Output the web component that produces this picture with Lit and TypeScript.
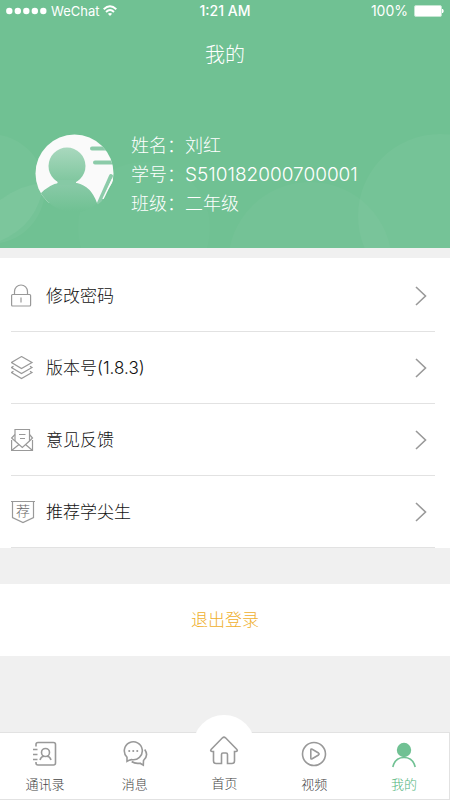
import { LitElement, html, css, svg } from "lit";
import { customElement } from "lit/decorators.js";
import { classMap } from "lit/directives/class-map.js";

const lockIcon = svg`<svg class="icon" viewBox="0 0 24 24" width="24" height="24">
  <path d="M3.500 10V7.500a6.500 6.500 0 0 1 13 0V10" /><rect x="0.600" y="10.500" width="19" height="11.500" rx="1" /><path d="M10 13.500v5" />
</svg>`;
const layersIcon = svg`<svg class="icon" viewBox="0 0 24 24" width="24" height="24">
  <path d="M10.5 .6L21 6.5L10.5 12.500L.5 6.500Z" />
  <path d="M2.500 10.200L.5 11.500L10.500 17.500L21 11.500L19 10.200" />
  <path d="M2.500 15.200L.5 16.500L10.500 22.500L21 16.500L19 15.200" />
</svg>`;
const mailIcon = svg`<svg class="icon" viewBox="0 0 24 24" width="24" height="24">
  <path d="M4 13V1.500H18.500V13" /><path d="M4 6.500L.6 10L4 13L11.300 19.500L18.500 13L21.500 10L18.500 6.500" />
  <path d="M.6 12V22.500H21.500V12M.6 22.500L8 16.500M21.500 22.500L14.500 16.500" />
  <path d="M8 6.500H14.500M9 10.500H14" />
</svg>`;
const recommendIcon = svg`<svg class="icon" viewBox="0 0 24 24" width="24" height="24">
  <path d="M0 1.500H24M1.500 1.500V17.500L12 22.500L22.500 17.500V1.500" />
  <text class="glyph" x="12" y="16" text-anchor="middle">荐</text>
</svg>`;

const contactsIcon = svg`<svg class="tab-icon" viewBox="0 0 28 28" width="28" height="28">
  <path d="M5 6.500V4.500Q5 2.500 7 2.500H22.500Q24.500 2.500 24.500 4.500V23Q24.500 25 22.500 25H7Q5 25 5 23V22" />
  <path d="M2 9.500H6.500M2 14.500H6.500M2 19.500H6.500" />
  <circle cx="14.500" cy="12.500" r="4" /><path d="M9 20Q10 16.500 13 16.300M20 20Q19 16.500 16 16.300" />
</svg>`;
const chatIcon = svg`<svg class="tab-icon" viewBox="0 0 28 28" width="28" height="28">
  <path d="M6 21.300V17.200A9 9 0 1 1 10.500 19.600Q8 20 6 21.300Z" />
  <path d="M23.700 9.500Q28 15.500 22.500 20.500L22.300 25.200L19 23.200Q14 24 10.700 21.500" />
  <path class="dots" d="M8.200 11h.1M12.200 11h.1M16.200 11h.1" />
</svg>`;
const homeIcon = svg`<svg class="tab-icon" viewBox="0 0 30 30" width="30" height="30">
  <path d="M4.500 16.500H3Q.8 16 2.300 14.300L13.500 2.800Q15 1.500 16.500 2.800L27.700 14.300Q29.200 16 27 16.500H25.500V26Q25.500 28.500 23 28.500H18.500V19.500Q18.500 18 17 18H14Q12.500 18 12.500 19.500V28.500H7Q4.500 28.500 4.500 26Z" />
</svg>`;
const videoIcon = svg`<svg class="tab-icon" viewBox="0 0 28 28" width="28" height="28">
  <circle cx="14" cy="14" r="11.500" /><path d="M10.800 10Q10.800 8.500 12.200 9.200L18.500 13Q19.700 14 18.500 15L12.200 18.800Q10.800 19.500 10.800 18Z" />
</svg>`;
const meIcon = svg`<svg class="tab-icon" viewBox="0 0 28 28" width="28" height="28">
  <circle class="solid" cx="14" cy="10" r="7.200" /><path d="M2.800 27Q5 17.500 14 17.500Q23 17.500 25.200 27" />
</svg>`;

const rows = [
  { icon: lockIcon, text: "修改密码" },
  { icon: layersIcon, text: "版本号(1.8.3)" },
  { icon: mailIcon, text: "意见反馈" },
  { icon: recommendIcon, text: "推荐学尖生" },
];

const tabs = [
  { icon: contactsIcon, text: "通讯录", kind: "" },
  { icon: chatIcon, text: "消息", kind: "" },
  { icon: homeIcon, text: "首页", kind: "home" },
  { icon: videoIcon, text: "视频", kind: "" },
  { icon: meIcon, text: "我的", kind: "active" },
];

@customElement("app-root")
export class AppRoot extends LitElement {
  static styles = css`
    :host {
      display: flex;
      flex-direction: column;
      min-height: 100vh;
      background: #f0f0f0;
      color: #333;
      font-family: Inter, "Noto Sans CJK SC", sans-serif;
      font-weight: 300;
    }
    * { box-sizing: border-box; }
    svg { display: block; flex: none; }
    button { font: inherit; border: 0; margin: 0; cursor: pointer; }

    .header {
      position: relative;
      overflow: hidden;
      height: 248px;
      background: #70c193;
      color: #fff;
    }
    .bubbles { position: absolute; inset: 0; width: 100%; height: 100%; }
    .content { position: relative; }
    .status {
      display: grid;
      grid-template-columns: 1fr auto 1fr;
      align-items: center;
      height: 22px;
      padding: 0 6px;
      font-size: 14px;
      line-height: 20px;
      font-weight: 400;
    }
    .carrier, .power { display: flex; align-items: center; }
    .carrier { gap: 4px; font-size: 13px; }
    .power { gap: 6px; justify-content: flex-end; }
    .time { font-weight: 500; }
    .title {
      margin: 0;
      padding-top: 17px;
      font-size: 20px;
      line-height: 32px;
      font-weight: 300;
      text-align: center;
    }
    .profile {
      display: flex;
      gap: 16px;
      padding: 60px 35px 0;
    }
    .avatar { margin-top: 3px; }
    .facts { margin: 0; font-size: 18px; line-height: 29px; }
    .fact { display: flex; }
    .fact dd { margin: 0; }
    .fact .number { font-size: 19px; }

    .list {
      list-style: none;
      margin: 10px 0 0;
      padding: 0 15px 0 11px;
      background: #fff;
    }
    .item { border-bottom: 1px solid #e2e2e2; }
    .row {
      display: flex;
      align-items: center;
      gap: 11px;
      width: 100%;
      height: 71px;
      padding: 0 8px 0 0;
      background: none;
      color: #111;
      font-size: 17px;
      text-align: left;
    }
    .item:first-child .row { height: 73px; padding-top: 2px; }
    .label { flex: 1; padding-bottom: 2px; }
    .icon { fill: none; stroke: #999; stroke-width: 1.2; }
    .glyph { fill: #666; stroke: none; font-size: 14px; }
    .arrow { fill: none; stroke: #999; stroke-width: 1.6; }

    .logout {
      width: 100%;
      height: 72px;
      margin-top: 36px;
      padding: 0 0 4px;
      background: #fff;
      color: #efaf2c;
      font-size: 17px;
    }

    .tabs {
      display: grid;
      grid-template-columns: repeat(5, 1fr);
      height: 68px;
      margin-top: auto;
      background: #fff;
      border: 1px solid #e2e2e2;
      border-left: 0;
    }
    .tab {
      position: relative;
      display: flex;
      flex-direction: column;
      align-items: center;
      gap: 6px;
      padding: 7px 0 0;
      color: #444;
      font-size: 13px;
      line-height: 20px;
      text-decoration: none;
    }
    .home { padding-top: 2px; gap: 8px; }
    .home::before {
      content: "";
      position: absolute;
      top: -18px;
      left: calc(50% - 31px);
      width: 62px;
      height: 62px;
      border-radius: 50%;
      background: #fff;
    }
    .home > * { position: relative; }
    .tab-icon { fill: none; stroke: #999; stroke-width: 1.6; }
    .dots { stroke-width: 2; stroke-linecap: round; }
    .active { color: #50b47a; }
    .active .tab-icon { stroke: #70c193; }
    .active .tab-icon .solid { fill: #70c193; stroke: none; }
  `;

  render() {
    return html`
      <header class="header">
        <svg class="bubbles" viewBox="0 0 450 248" preserveAspectRatio="xMidYMax slice" aria-hidden="true">
          <g fill="#fff">
            <circle cx="-10" cy="189" r="55" fill-opacity=".04" />
            <path d="M0 200Q22 184 44 183Q38 225 0 241Z" fill-opacity=".05" />
            <circle cx="144" cy="228" r="66" fill-opacity=".02" />
            <circle cx="310" cy="264" r="82" fill-opacity=".03" />
            <circle cx="440" cy="216" r="82" fill-opacity=".04" />
          </g>
        </svg>
        <div class="content">
          <div class="status">
            <span class="carrier">
              <svg width="41" height="10" viewBox="0 0 41 10" fill="#fff">
                <circle cx="3.300" cy="5" r="3.200" /><circle cx="11.800" cy="5" r="3.200" /><circle cx="20.300" cy="5" r="3.200" /><circle cx="28.800" cy="5" r="3.200" /><circle cx="37.300" cy="5" r="3.200" />
              </svg>
              <span>WeChat</span>
              <svg width="14" height="12" viewBox="0 0 14 12" fill="none" stroke="#fff" stroke-width="1.900">
                <path d="M.7 4.200Q7-1.700 13.300 4.200M3 7Q7 3.200 11 7" /><path d="M4.900 8.800Q7 7 9.100 8.800L7 11Z" fill="#fff" stroke="none" />
              </svg>
            </span>
            <span class="time">1:21 AM</span>
            <span class="power">
              <span>100%</span>
              <svg width="30" height="12" viewBox="0 0 30 12">
                <rect x=".5" y=".5" width="27" height="11" rx="1.500" fill="#fff" stroke="#c4e6d2" /><path d="M28.500 4Q30 6 28.500 8Z" fill="#fff" stroke="#fff" />
              </svg>
            </span>
          </div>
          <h1 class="title">我的</h1>
          <section class="profile">
            <svg class="avatar" width="80" height="80" viewBox="0 0 80 80" role="img" aria-label="头像">
              <defs>
                <linearGradient id="head" x1="0" y1="0" x2="0" y2="1"><stop offset="0" stop-color="#a9d8be" /><stop offset="1" stop-color="#7cc59c" /></linearGradient>
                <linearGradient id="body" x1="0" y1="0" x2="0" y2="1"><stop offset="0" stop-color="#8acaa8" /><stop offset=".9" stop-color="#70c193" /></linearGradient>
                <clipPath id="disc"><circle cx="39.500" cy="39.500" r="39" /></clipPath>
              </defs>
              <g clip-path="url(#disc)">
                <path d="M0 0H80V45L64 69H5L0 60Z" fill="#fafafa" />
                <path d="M57 14.500H80M60 28.500H80" stroke="#8ccba9" stroke-width="4" stroke-linecap="round" />
                <path d="M76 42L64 69" stroke="#8ccba9" stroke-width="4" stroke-linecap="round" />
                <path d="M80 43L66 72H80Z" fill="#70c193" />
                <path d="M77.500 45L68 65" stroke="#fafafa" stroke-width="1.500" />
                <path d="M5 60Q15 50 24 49H42Q56 52 62 69Q52 80 32 80Q10 80 0 64Z" fill="url(#body)" />
              </g>
              <ellipse cx="32" cy="32" rx="18.500" ry="18.500" fill="url(#head)" />
              <path d="M22 46Q24 50 20 51H44Q39 50 42 46Z" fill="#86c9a5" />
            </svg>
            <dl class="facts">
              <div class="fact"><dt>姓名：</dt><dd>刘红</dd></div>
              <div class="fact"><dt>学号：</dt><dd class="number">S510182000700001</dd></div>
              <div class="fact"><dt>班级：</dt><dd>二年级</dd></div>
            </dl>
          </section>
        </div>
      </header>

      <ul class="list">
        ${rows.map(
          (r) => html`<li class="item">
            <button class="row" type="button">
              ${r.icon}<span class="label">${r.text}</span>
              <svg class="arrow" width="12" height="20" viewBox="0 0 12 20"><path d="M1 1L10.500 10L1 19" /></svg>
            </button>
          </li>`
        )}
      </ul>

      <button class="logout" type="button">退出登录</button>

      <nav class="tabs">
        ${tabs.map(
          (t) => html`<a href="#" class=${classMap({ tab: true, home: t.kind === "home", active: t.kind === "active" })}>
            ${t.icon}<span>${t.text}</span>
          </a>`
        )}
      </nav>
    `;
  }
}
